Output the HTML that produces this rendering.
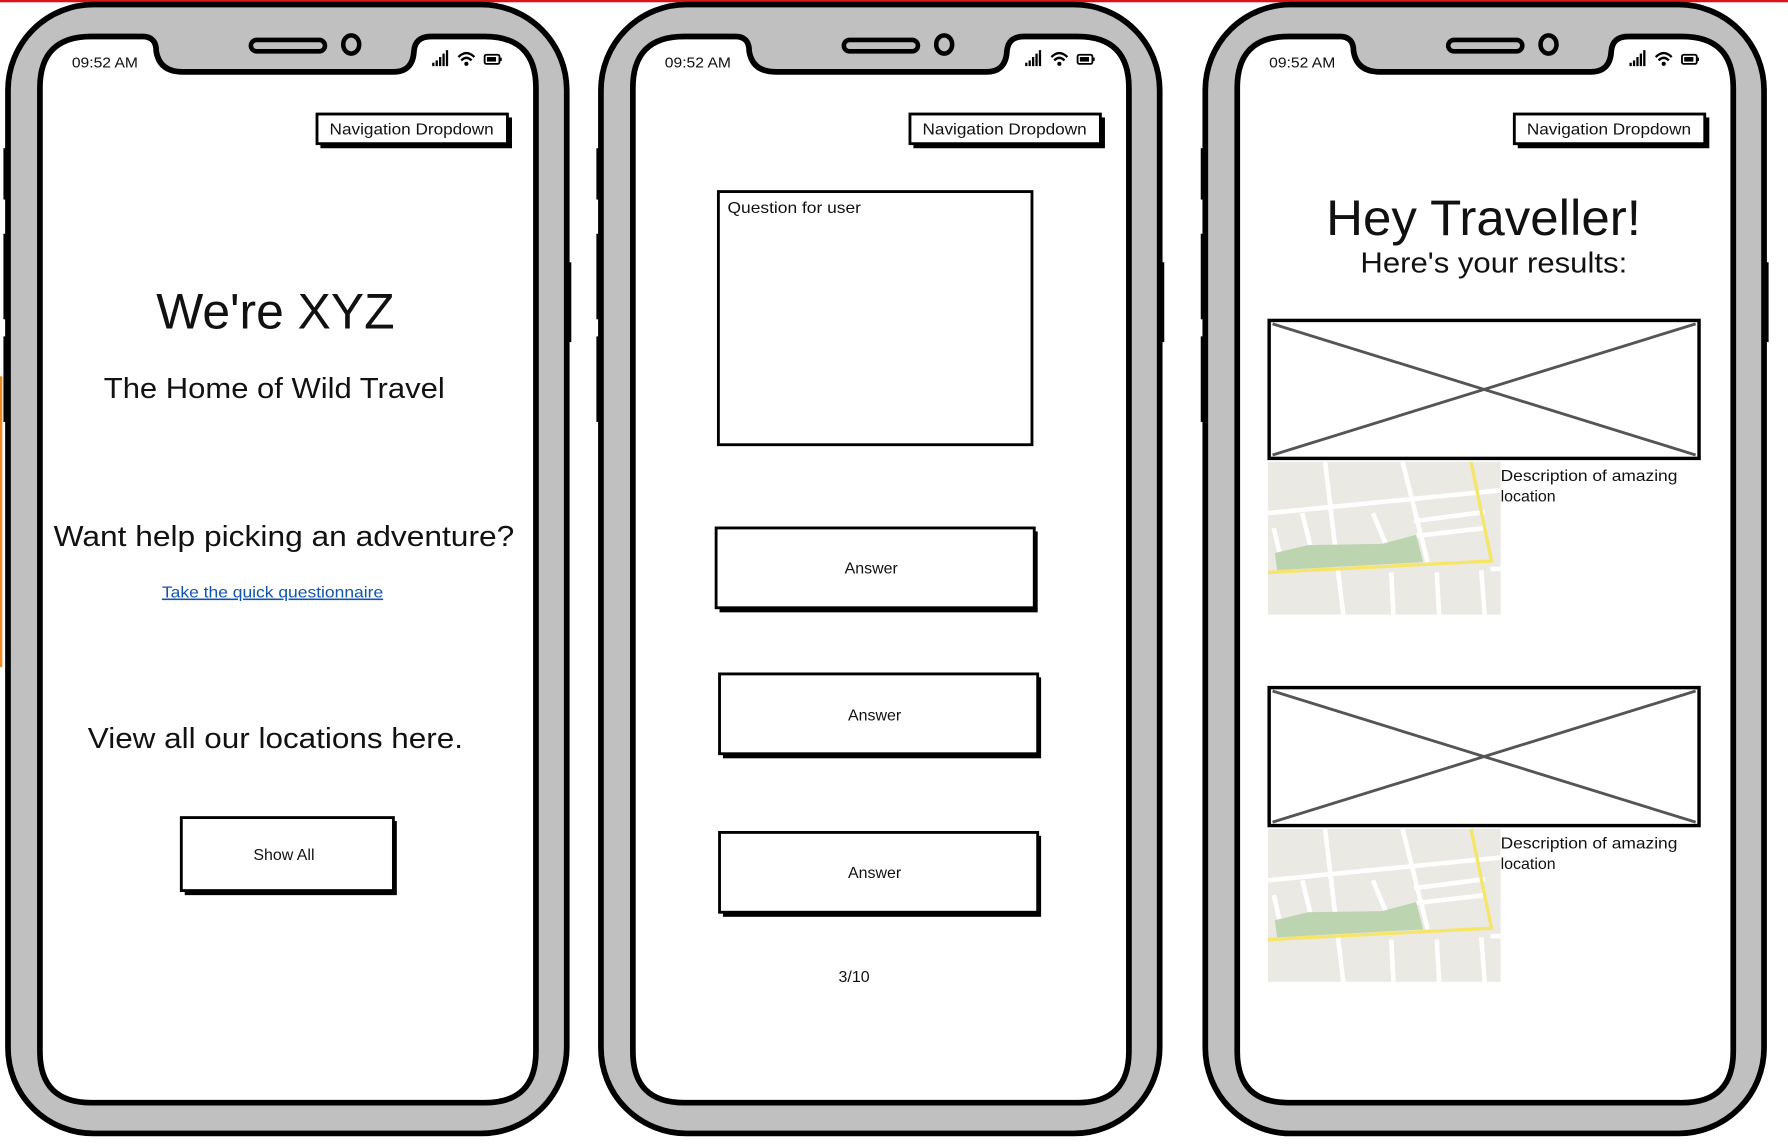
<!DOCTYPE html>
<html><head><meta charset="utf-8"><style>
html,body{margin:0;padding:0;background:#fff;width:1788px;height:1146px;overflow:hidden}
svg{display:block}
text{font-family:"Liberation Sans",sans-serif;fill:#111}
</style></head><body>
<svg width="1788" height="1146" viewBox="0 0 1568 1005" xmlns="http://www.w3.org/2000/svg">
<defs>
<g id="phone">
  <rect x="3" y="130" width="6" height="45" fill="#000"/>
  <rect x="3" y="205" width="6" height="75" fill="#000"/>
  <rect x="3" y="295" width="6" height="75" fill="#000"/>
  <rect x="495" y="230" width="6" height="70" fill="#000"/>
  <rect x="7" y="4" width="490" height="990" rx="75" fill="#c0c0c0" stroke="#000" stroke-width="5"/>
  <path d="M80,32 L125,32 Q137,32 137,45 Q140,63 160,63 L345,63 Q362,63 363,45 Q364,32 378,32 L425,32 Q470,32 470,77 L470,922 Q470,967 425,967 L80,967 Q35,967 35,922 L35,77 Q35,32 80,32 Z" fill="#fff" stroke="#000" stroke-width="5"/>
  <rect x="220" y="35" width="65" height="10" rx="5" fill="#c0c0c0" stroke="#000" stroke-width="4"/>
  <ellipse cx="308" cy="39" rx="7" ry="8" fill="#c0c0c0" stroke="#000" stroke-width="4"/>
  <text x="63" y="59" font-size="13" textLength="58" lengthAdjust="spacingAndGlyphs">09:52 AM</text>
  <rect x="379" y="55" width="2" height="3" fill="#000"/><rect x="382" y="53" width="2" height="5" fill="#000"/><rect x="385" y="50" width="2" height="8" fill="#000"/><rect x="388" y="47" width="2" height="11" fill="#000"/><rect x="391" y="44" width="2" height="14" fill="#000"/>
  <path d="M402,50 Q409,43 416,50 M404.5,53 Q409,48.5 413.5,53" fill="none" stroke="#000" stroke-width="2"/><circle cx="409" cy="56" r="1.8" fill="#000"/>
  <rect x="425" y="48" width="13" height="8" rx="1.5" fill="none" stroke="#000" stroke-width="1.6"/><rect x="427" y="50" width="8" height="4" fill="#000"/><rect x="438.5" y="50.5" width="1.5" height="3" fill="#000"/>
  <rect x="281" y="103" width="168" height="27" fill="#000"/>
  <rect x="278" y="100" width="167" height="26" fill="#fff" stroke="#000" stroke-width="2.5"/>
  <text x="289" y="118" font-size="14" textLength="144" lengthAdjust="spacingAndGlyphs">Navigation Dropdown</text>
</g>
<g id="map">
  <rect x="0" y="0" width="204" height="134" fill="#ebe9e4"/>
  <g stroke="#fff" stroke-width="4" fill="none">
    <path d="M0,45 L204,25 M128,52 L190,44 M130,65 L190,58 M50,0 L66,134 M118,0 L140,88 M30,45 L40,85 M92,45 L104,74 M5,58 L14,97 M108,97 L110,134 M148,97 L150,134 M187,95 L190,134 M195,94 L204,94"/>
  </g>
  <path d="M6,80 L35,73 L100,72 L130,64 L136,88 L8,95 Z" fill="#bcd4b0"/>
  <path d="M178,0 L196,87 L0,97" fill="none" stroke="#f5e56b" stroke-width="3"/>
</g>
<g id="xbox">
  <rect x="1113" y="281" width="377" height="121" fill="#fff" stroke="#000" stroke-width="3"/>
  <path d="M1116,284 L1487,399 M1487,284 L1116,399" stroke="#555" stroke-width="2.5"/>
</g>
</defs>
<rect x="0" y="0" width="1568" height="2" fill="#d9141a"/>
<rect x="0" y="330" width="2" height="255" fill="#f08a24"/>

<use href="#phone"/>
<use href="#phone" transform="translate(520,0)"/>
<use href="#phone" transform="translate(1050,0)"/>

<!-- Phone 1 -->
<text x="137" y="288" font-size="44" textLength="209" lengthAdjust="spacingAndGlyphs">We're XYZ</text>
<text x="91" y="349" font-size="25" textLength="299" lengthAdjust="spacingAndGlyphs">The Home of Wild Travel</text>
<text x="47" y="479" font-size="25" textLength="404" lengthAdjust="spacingAndGlyphs">Want help picking an adventure?</text>
<text x="142" y="524" font-size="14" style="fill:#1155aa" text-decoration="underline" textLength="194" lengthAdjust="spacingAndGlyphs">Take the quick questionnaire</text>
<text x="77" y="656" font-size="25" textLength="329" lengthAdjust="spacingAndGlyphs">View all our locations here.</text>
<rect x="162" y="720" width="186" height="65" fill="#000"/>
<rect x="159" y="717" width="186" height="64" fill="#fff" stroke="#000" stroke-width="2.5"/>
<text x="249" y="754" font-size="14" text-anchor="middle">Show All</text>

<!-- Phone 2 -->
<rect x="630" y="168" width="275" height="222" fill="#fff" stroke="#000" stroke-width="2.5"/>
<text x="638" y="187" font-size="14" textLength="117" lengthAdjust="spacingAndGlyphs">Question for user</text>
<rect x="631" y="466" width="279" height="71" fill="#000"/>
<rect x="628" y="463" width="279" height="70" fill="#fff" stroke="#000" stroke-width="2.5"/>
<text x="764" y="503" font-size="14" text-anchor="middle">Answer</text>
<rect x="634" y="594" width="279" height="71" fill="#000"/>
<rect x="631" y="591" width="279" height="70" fill="#fff" stroke="#000" stroke-width="2.5"/>
<text x="767" y="632" font-size="14" text-anchor="middle">Answer</text>
<rect x="634" y="733" width="279" height="71" fill="#000"/>
<rect x="631" y="730" width="279" height="70" fill="#fff" stroke="#000" stroke-width="2.5"/>
<text x="767" y="770" font-size="14" text-anchor="middle">Answer</text>
<text x="749" y="861" font-size="14" text-anchor="middle">3/10</text>

<!-- Phone 3 -->
<text x="1163" y="206" font-size="44" textLength="276" lengthAdjust="spacingAndGlyphs">Hey Traveller!</text>
<text x="1193" y="239" font-size="25" textLength="234" lengthAdjust="spacingAndGlyphs">Here's your results:</text>
<use href="#xbox"/>
<use href="#map" transform="translate(1112,405)"/>
<text x="1316" y="422" font-size="14" textLength="155" lengthAdjust="spacingAndGlyphs">Description of amazing</text>
<text x="1316" y="440" font-size="14">location</text>
<use href="#xbox" transform="translate(0,322)"/>
<use href="#map" transform="translate(1112,727)"/>
<text x="1316" y="744" font-size="14" textLength="155" lengthAdjust="spacingAndGlyphs">Description of amazing</text>
<text x="1316" y="762" font-size="14">location</text>
</svg>
</body></html>
